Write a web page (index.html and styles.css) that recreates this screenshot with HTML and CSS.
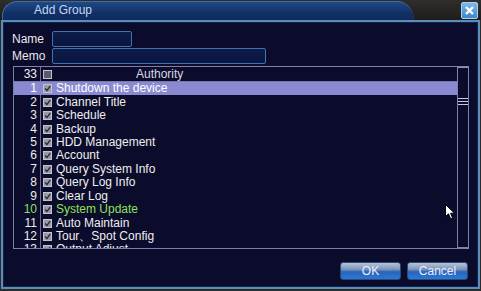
FILE: index.html
```html
<!DOCTYPE html>
<html lang="en">
<head>
    <meta charset="UTF-8">
    <title>Add Group</title>
    <link rel="stylesheet" href="styles.css">
</head>
<body>
    <div class="window">
        <div class="titlebar">
            <div class="tab">Add Group</div>
            <div class="close">
                <svg width="11" height="11" viewBox="0 0 11 11"><path d="M2 2 L9 9 M9 2 L2 9" stroke="#fff" stroke-width="2.4"/></svg>
            </div>
        </div>
        <div class="body">
            <div class="field">
                <label>Name</label>
                <div class="input short"></div>
            </div>
            <div class="field">
                <label>Memo</label>
                <div class="input long"></div>
            </div>

            <div class="table">
                <div class="list">
                    <div class="row head">
                        <span class="num">33</span>
                        <span class="cb"></span>
                        <span class="name">Authority</span>
                    </div>
                    <div class="rows" id="rows"></div>
                </div>
                <div class="scrollbar">
                    <div class="thumb"></div>
                </div>
            </div>

            <div class="buttons">
                <button class="btn">OK</button>
                <button class="btn">Cancel</button>
            </div>

            <svg class="cursor" width="11" height="16" viewBox="0 0 11 16">
                <path d="M0.5 0.5 L0.5 12.5 L3.5 9.8 L5.6 14.8 L7.6 14 L5.6 9.2 L9.5 9.2 Z" fill="#fff" stroke="#000" stroke-width="1"/>
            </svg>
        </div>
    </div>
    <script>
        const items = [
            'Shutdown the device', 'Channel Title', 'Schedule', 'Backup',
            'HDD Management', 'Account', 'Query System Info', 'Query Log Info',
            'Clear Log', 'System Update', 'Auto Maintain', 'Tour\u3001Spot Config',
            'Output Adjust'
        ];
        const check = '<svg width="7" height="7" viewBox="0 0 7 7"><path d="M1 3.5 L3 5.5 L6.2 1.2" stroke="#2a2a3a" stroke-width="1.4" fill="none"/></svg>';
        const rows = document.getElementById('rows');
        items.forEach((text, i) => {
            const row = document.createElement('div');
            row.className = 'row';
            if (i === 0) row.classList.add('selected');
            if (i === 9) row.classList.add('green');
            row.innerHTML = '<span class="num">' + (i + 1) + '</span>' +
                '<span class="cb">' + check + '</span>' +
                '<span class="name">' + text + '</span>';
            rows.appendChild(row);
        });
    </script>
</body>
</html>
```

FILE: styles.css
```css
body {
    margin: 0;
    background-color: #2b2a27;
    font-family: "Liberation Sans", Arial, sans-serif;
    font-size: 12px;
    color: #eeeeee;
}

.window {
    width: 481px;
    height: 291px;
    display: flex;
    flex-direction: column;
    background-color: #2b2a27;
    overflow: hidden;
}

.titlebar {
    height: 20px;
    display: flex;
    align-items: flex-end;
    background: linear-gradient(#2f2e2b, #1e1d1b);
}

.tab {
    width: 412px;
    height: 19px;
    margin-left: 2px;
    padding-left: 31px;
    box-sizing: border-box;
    line-height: 17px;
    color: #c6d6f2;
    background: linear-gradient(#1f4a86, #113066 60%, #0f2b5c);
    border-top: 1px solid #3d6aa6;
    border-left: 1px solid #3d6aa6;
    border-top-left-radius: 18px 17px;
    border-top-right-radius: 20px 22px;
}

.close {
    width: 17px;
    height: 17px;
    margin-left: auto;
    margin-right: 3px;
    align-self: center;
    display: flex;
    align-items: center;
    justify-content: center;
    background: linear-gradient(#7cb8ec, #3e86cc);
    border: 1px solid #a8d0f4;
    border-radius: 2px;
    box-sizing: border-box;
}

.body {
    position: relative;
    flex: 1;
    margin: 0 1px 2px 1px;
    border: 2px solid #5d8cb8;
    box-shadow: inset 0 0 0 1px #0f2550;
    background-color: #0b0b2b;
    padding: 9px 9px 0 9px;
}

.field {
    display: flex;
    align-items: center;
    height: 16px;
    margin-bottom: 1px;
}

.field label {
    width: 40px;
    color: #e8e8ee;
}

.input {
    height: 16px;
    box-sizing: border-box;
    border: 1px solid #3f74b0;
    border-radius: 2px;
    background: linear-gradient(#0c1c48, #0a1640);
}

.input.short {
    width: 80px;
}

.input.long {
    width: 214px;
}

.table {
    display: flex;
    width: 456px;
    height: 183px;
    margin-top: 2px;
    margin-left: 1px;
    box-sizing: border-box;
    border: 1px solid #8080b0;
    border-right: none;
}

.list {
    flex: 1;
    overflow: hidden;
    background: linear-gradient(90deg, transparent 26px, #6a6a9a 26px, #6a6a9a 27px, transparent 27px);
}

.row {
    display: flex;
    align-items: center;
    height: 13.45px;
    line-height: 13px;
    white-space: nowrap;
}

.row.head {
    height: 13px;
    padding-top: 1px;
    border-bottom: 1px solid #7a7aaa;
}

.row.head .name {
    padding-left: 80px;
    color: #d8d8e4;
}

.row.head .cb {
    background-color: #5a5a6a;
}

.num {
    width: 23px;
    text-align: right;
    padding-right: 6px;
}

.cb {
    width: 9px;
    height: 9px;
    box-sizing: border-box;
    background-color: #9a9aa6;
    border: 1px solid #c4c4cc;
    display: flex;
    align-items: center;
    justify-content: center;
    margin-right: 4px;
}

.row.selected {
    background-color: #8a8ad2;
    color: #ffffff;
}

.row.green {
    color: #8ee05a;
}

.scrollbar {
    width: 12px;
    box-sizing: border-box;
    border: 1px solid #8080b0;
    border-top: 1px solid #9090c0;
    display: flex;
    justify-content: center;
}

.thumb {
    width: 10px;
    height: 5px;
    margin-top: 30px;
    border-top: 1px solid #c8c8e0;
    border-bottom: 1px solid #c8c8e0;
    background: linear-gradient(transparent 2px, #c8c8e0 2px, #c8c8e0 3px, transparent 3px);
}

.buttons {
    display: flex;
    justify-content: flex-end;
    gap: 6px;
    margin-top: 13px;
    width: 456px;
}

.btn {
    width: 61px;
    height: 18px;
    padding: 0;
    border: 1px solid #2a4a7a;
    border-radius: 3px;
    font-family: "Liberation Sans", Arial, sans-serif;
    font-size: 12px;
    color: #e8f0ff;
    background: linear-gradient(#b8c4d6 0%, #7c94b8 40%, #2a64b8 55%, #2a78d8 100%);
}

.cursor {
    position: absolute;
    left: 442px;
    top: 182px;
}
```
